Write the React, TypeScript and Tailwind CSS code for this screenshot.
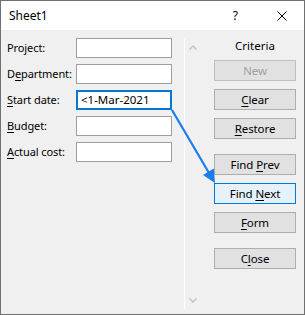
import React from 'react';

const font = { fontFamily: '"Noto Sans", "Open Sans", sans-serif' };

function Key({ children }: { children: React.ReactNode }) {
  return <span className="underline underline-offset-[2px] decoration-1">{children}</span>;
}

type Field = { pre: string; key: string; post: string; value?: string; active?: boolean };

const fields: Field[] = [
  { pre: 'Pro', key: 'j', post: 'ect:' },
  { pre: 'D', key: 'e', post: 'partment:' },
  { pre: '', key: 'S', post: 'tart date:', value: '<1-Mar-2021', active: true },
  { pre: '', key: 'B', post: 'udget:' },
  { pre: '', key: 'A', post: 'ctual cost:' },
];

function Btn({
  children,
  disabled,
  focused,
  className = '',
}: {
  children: React.ReactNode;
  disabled?: boolean;
  focused?: boolean;
  className?: string;
}) {
  const tone = focused
    ? 'bg-[#e5f1fb] border-[#0078d7] text-black'
    : disabled
      ? 'bg-[#e1e1e1] border-[#bfbfbf] text-[#a0a0a0]'
      : 'bg-[#e1e1e1] border-[#adadad] text-black';
  return (
    <div
      className={`w-[82px] h-[21px] border flex items-center justify-center text-[11.5px] tracking-[-0.1px] leading-none ${tone} ${className}`}
    >
      {children}
    </div>
  );
}

export default function App() {
  return (
    <div
      style={font}
      className="relative w-[305px] h-[315px] border border-[#707070] bg-[#f0f0f0] flex flex-col overflow-hidden"
    >
      {/* Title bar */}
      <div className="h-[29px] bg-white flex items-center pl-[8px] shrink-0">
        <span className="text-[12px] text-black flex-1">Sheet1</span>
        <span className="text-[12px] text-black mr-[39px]">?</span>
        <svg width="10" height="10" viewBox="0 0 10 10" className="mr-[17px]">
          <path d="M0.5 0.5 L9.5 9.5 M9.5 0.5 L0.5 9.5" stroke="#000" strokeWidth="1" />
        </svg>
      </div>

      {/* Body */}
      <div className="flex flex-1">
        {/* Fields */}
        <div className="w-[183px] pt-[8px] flex flex-col gap-[6px]">
          {fields.map((f) => (
            <div key={f.post} className="h-[20px] flex items-center">
              <div className="w-[75px] pl-[6px] text-[11px] tracking-[-0.1px] text-black whitespace-nowrap">
                {f.pre}
                <Key>{f.key}</Key>
                {f.post}
              </div>
              <div
                className={`w-[96px] h-[20px] bg-white flex items-center text-[11.5px] text-black ${
                  f.active ? 'border-2 border-[#0078d7] pl-[3px]' : 'border border-[#a0a0a0]'
                }`}
              >
                {f.value}
              </div>
            </div>
          ))}
        </div>

        {/* Scrollbar */}
        <div className="w-[17px] mt-[9px] mb-[5px] border-l border-white flex flex-col items-center justify-between pt-[6px] pb-[6px]">
          <svg width="8" height="5" viewBox="0 0 8 5">
            <path d="M0.5 4.5 L4 1 L7.5 4.5" stroke="#c4c4c4" strokeWidth="1.5" fill="none" />
          </svg>
          <svg width="8" height="5" viewBox="0 0 8 5">
            <path d="M0.5 0.5 L4 4 L7.5 0.5" stroke="#c4c4c4" strokeWidth="1.5" fill="none" />
          </svg>
        </div>

        {/* Buttons */}
        <div className="flex flex-col pl-[13px] pt-[8px]">
          <div className="w-[82px] h-[16px] text-center text-[11.5px] text-black leading-[16px]">Criteria</div>
          <Btn disabled className="mt-[6px]">New</Btn>
          <Btn className="mt-[8px]">
            <Key>C</Key>lear
          </Btn>
          <Btn className="mt-[8px]">
            <Key>R</Key>estore
          </Btn>
          <Btn className="mt-[15px]">
            Find&nbsp;<Key>P</Key>rev
          </Btn>
          <Btn focused className="mt-[8px]">
            Find&nbsp;<Key>N</Key>ext
          </Btn>
          <Btn className="mt-[8px]">
            <Key>F</Key>orm
          </Btn>
          <Btn className="mt-[15px]">
            C<Key>l</Key>ose
          </Btn>
        </div>
      </div>

      {/* Annotation arrow */}
      <svg className="absolute left-[-1px] top-[-1px] pointer-events-none" width="305" height="315">
        <line x1="172" y1="110" x2="209" y2="173" stroke="#1a7cf0" strokeWidth="2.2" />
        <polygon points="215,183 213.8,168.5 203,175" fill="#1a7cf0" />
      </svg>
    </div>
  );
}
